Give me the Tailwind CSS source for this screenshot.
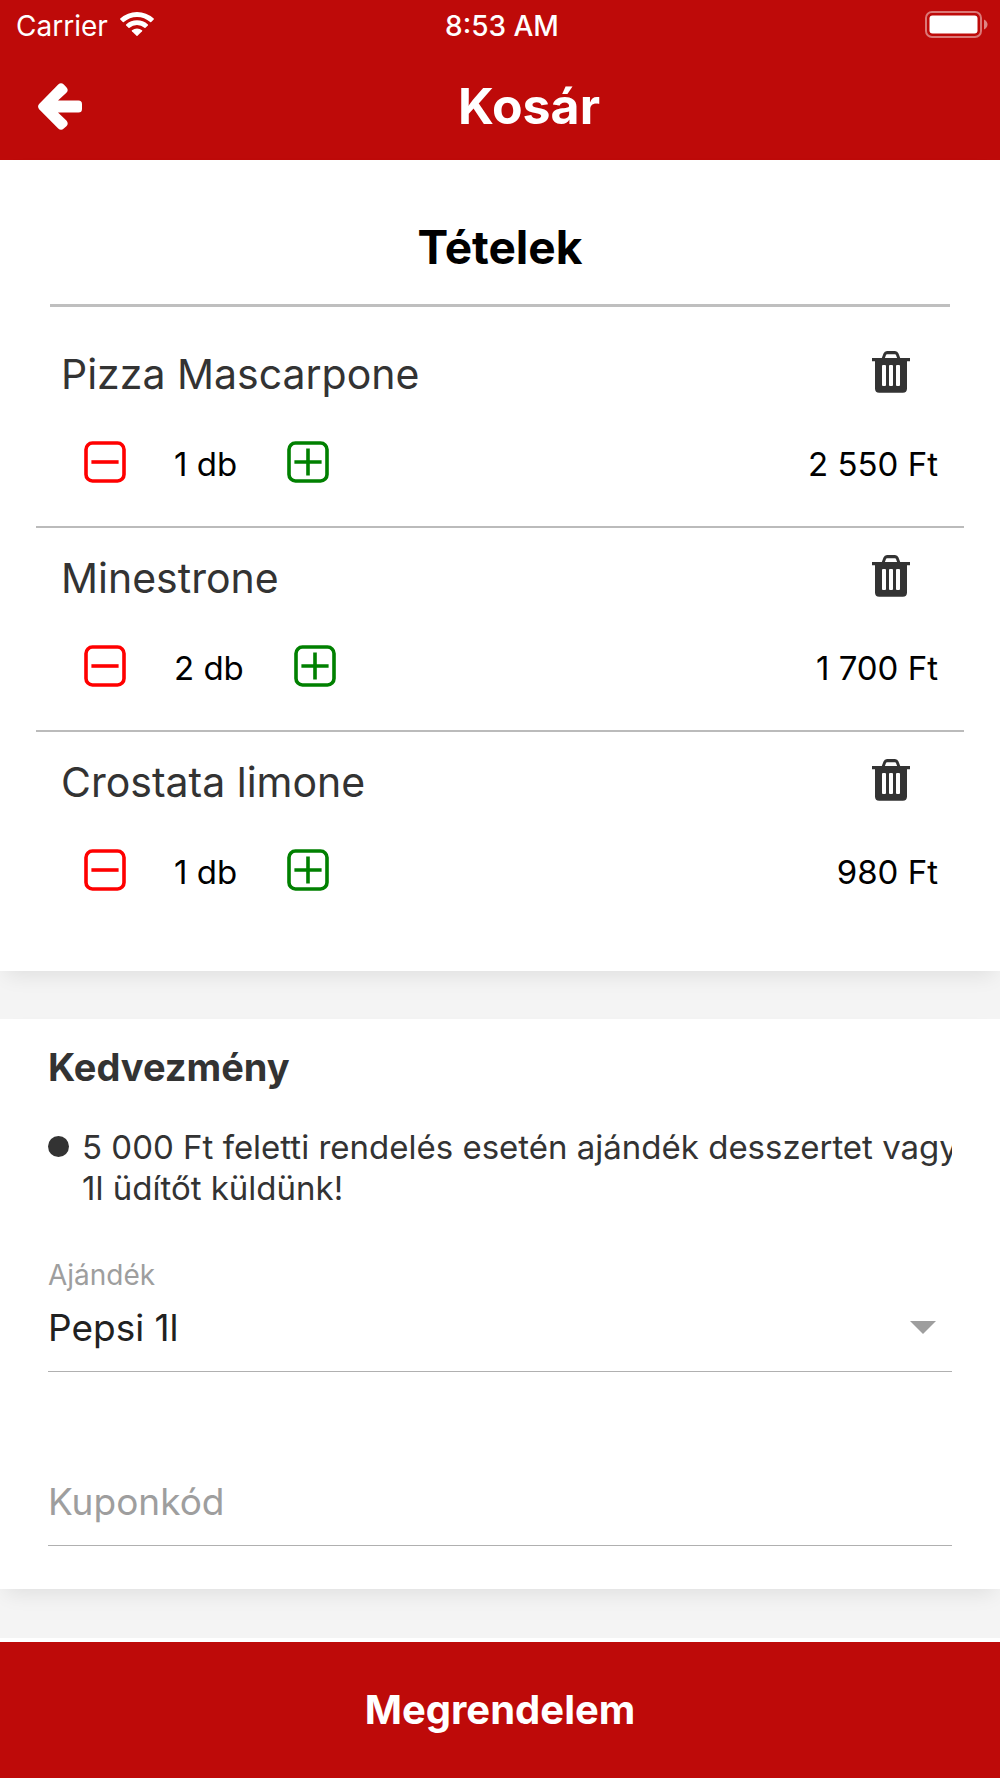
<!DOCTYPE html>
<html lang="hu">
<head>
<meta charset="utf-8">
<meta name="viewport" content="width=device-width, initial-scale=1">
<title>Kosár</title>
<script src="https://cdn.jsdelivr.net/npm/@tailwindcss/browser@4"></script>
</head>
<body class="flex min-h-screen flex-col bg-white font-['Inter',sans-serif] text-black">
<svg class="hidden" aria-hidden="true">
  <symbol id="trash" viewBox="0 0 38 42">
    <path fill="currentColor" fill-rule="evenodd" d="M0 7H9.800L11.500 2.500Q12.500 0 15 0H23Q25.500 0 26.500 2.500L28.200 7H38V10.300H35V37.500Q35 41.700 30.800 41.700H7.200Q3 41.700 3 37.500V10.300H0ZM12.900 7H25.100L24 4Q23.700 3.300 23 3.300H15Q14.300 3.300 14 4ZM11 14Q10 14 10 15V34Q10 35 11 35H13Q14 35 14 34V15Q14 14 13 14ZM18 14Q17 14 17 15V34Q17 35 18 35H20Q21 35 21 34V15Q21 14 20 14ZM25 14Q24 14 24 15V34Q24 35 25 35H27Q28 35 28 34V15Q28 14 27 14Z"/>
  </symbol>
  <symbol id="minus" viewBox="0 0 42 42">
    <rect x="2" y="2" width="38" height="38" rx="6.500" fill="none" stroke="currentColor" stroke-width="3.600"/>
    <path d="M9.200 21H32.800" stroke="currentColor" stroke-width="3.600" stroke-linecap="square" fill="none"/>
  </symbol>
  <symbol id="plus" viewBox="0 0 42 42">
    <rect x="2" y="2" width="38" height="38" rx="6.500" fill="none" stroke="currentColor" stroke-width="3.600"/>
    <path d="M9.200 21H32.800M21 9.200V32.800" stroke="currentColor" stroke-width="3.600" stroke-linecap="square" fill="none"/>
  </symbol>
</svg>

<header class="bg-[#be0a09] text-white">
  <div class="grid h-[52px] grid-cols-[1fr_auto_1fr] items-center pr-3 pl-4 text-[28px] leading-8">
    <div class="flex items-center gap-3">
      <span>Carrier</span>
      <svg class="mb-1 h-6 w-[34px]" viewBox="0 0 34 24" fill="currentColor" aria-hidden="true">
        <path d="M.3 6.600Q7.500 0 17 0T33.700 6.600Q34.200 7.100 33.700 7.600L31.200 10.100Q30.700 10.500 30.200 10.100Q24.500 4.900 17 4.900T3.800 10.100Q3.300 10.500 2.800 10.100L.3 7.600Q-.2 7.100.3 6.600Z"/>
        <path d="M6.100 12.400Q10.800 8.200 17 8.200T27.900 12.400Q28.400 12.900 27.900 13.400L25.500 15.800Q25 16.300 24.400 15.800Q21.300 13.100 17 13.100T9.600 15.800Q9 16.300 8.500 15.800L6.100 13.400Q5.600 12.900 6.100 12.400Z"/>
        <path d="M12 18.200Q14.200 16.500 17 16.500T22 18.200Q22.600 18.700 22.100 19.200L17.500 23.800Q17 24.200 16.500 23.800L11.900 19.200Q11.400 18.700 12 18.200Z"/>
      </svg>
    </div>
    <span class="text-center font-medium">8:53 AM</span>
    <svg class="mb-1 h-[27px] w-[63px] justify-self-end" viewBox="0 0 63 27" aria-hidden="true">
      <rect x="1" y="1" width="55" height="25" rx="6" fill="none" stroke="#fff" stroke-opacity=".45" stroke-width="2"/>
      <rect x="4.500" y="4.500" width="48" height="18" rx="3" fill="#fff"/>
      <path d="M59 8.500Q62.500 10.500 62.500 13.500T59 18.500Z" fill="#fff" fill-opacity=".5"/>
    </svg>
  </div>
  <div class="flex h-[108px] items-center pr-6 pl-[38px]">
    <button type="button" aria-label="Vissza" class="cursor-pointer">
      <svg class="h-[47px] w-11" viewBox="0 0 44 47" fill="currentColor" aria-hidden="true">
        <path d="M1.100 21L20.200 1.600Q23 -.9 25.800 1.600L28.400 4.200Q31 7 28.400 9.800L20 17.600H40.500Q44 17.600 44 21.200V26Q44 29.600 40.500 29.600H20L28.400 37.600Q31 40.400 28.400 43.200L25.800 45.600Q23 48 20.200 45.500L1.100 26.200Q-1 23.600 1.100 21Z"/>
      </svg>
    </button>
    <h1 class="flex-1 text-center text-[50px] leading-[60px] font-bold">Kosár</h1>
  </div>
</header>

<main class="flex-1 bg-[#f4f4f4] pb-12">
  <section class="bg-white px-9 pt-[57px] pb-[37px] shadow-[0_10px_20px_-6px_rgba(0,0,0,0.09)]">
    <h2 class="mx-[14px] border-b-3 border-[#bfbfbf] pb-[27px] text-center text-[46px] leading-[60px] font-bold">Tételek</h2>
    <ul class="mt-[17px] divide-y-2 divide-[#bbb]">
      <li class="pt-[27px] pr-[26px] pb-[43px] pl-[25px]">
        <div class="flex h-12 items-start justify-between">
          <h3 class="text-[41px] leading-[46px] text-[#333]">Pizza Mascarpone</h3>
          <button type="button" aria-label="Törlés" class="mr-7 cursor-pointer text-[#333]"><svg class="h-[42px] w-[38px]"><use href="#trash"/></svg></button>
        </div>
        <div class="mt-[42px] flex h-[42px] items-end pl-[23px] text-[33px] leading-[38px]">
          <button type="button" aria-label="Kevesebb" class="cursor-pointer text-[#f00]"><svg class="size-[42px]"><use href="#minus"/></svg></button>
          <span class="mr-[50px] ml-12">1 db</span>
          <button type="button" aria-label="Több" class="cursor-pointer text-[#008000]"><svg class="size-[42px]"><use href="#plus"/></svg></button>
          <span class="ml-auto">2 550 Ft</span>
        </div>
      </li>
      <li class="pt-[27px] pr-[26px] pb-[43px] pl-[25px]">
        <div class="flex h-12 items-start justify-between">
          <h3 class="text-[41px] leading-[46px] text-[#333]">Minestrone</h3>
          <button type="button" aria-label="Törlés" class="mr-7 cursor-pointer text-[#333]"><svg class="h-[42px] w-[38px]"><use href="#trash"/></svg></button>
        </div>
        <div class="mt-[42px] flex h-[42px] items-end pl-[23px] text-[33px] leading-[38px]">
          <button type="button" aria-label="Kevesebb" class="cursor-pointer text-[#f00]"><svg class="size-[42px]"><use href="#minus"/></svg></button>
          <span class="mr-[50px] ml-12">2 db</span>
          <button type="button" aria-label="Több" class="cursor-pointer text-[#008000]"><svg class="size-[42px]"><use href="#plus"/></svg></button>
          <span class="ml-auto">1 700 Ft</span>
        </div>
      </li>
      <li class="pt-[27px] pr-[26px] pb-[43px] pl-[25px]">
        <div class="flex h-12 items-start justify-between">
          <h3 class="text-[41px] leading-[46px] text-[#333]">Crostata limone</h3>
          <button type="button" aria-label="Törlés" class="mr-7 cursor-pointer text-[#333]"><svg class="h-[42px] w-[38px]"><use href="#trash"/></svg></button>
        </div>
        <div class="mt-[42px] flex h-[42px] items-end pl-[23px] text-[33px] leading-[38px]">
          <button type="button" aria-label="Kevesebb" class="cursor-pointer text-[#f00]"><svg class="size-[42px]"><use href="#minus"/></svg></button>
          <span class="mr-[50px] ml-12">1 db</span>
          <button type="button" aria-label="Több" class="cursor-pointer text-[#008000]"><svg class="size-[42px]"><use href="#plus"/></svg></button>
          <span class="ml-auto">980 Ft</span>
        </div>
      </li>
    </ul>
  </section>

  <section class="mt-12 bg-white px-12 pt-6 pb-[43px] shadow-[0_10px_20px_-6px_rgba(0,0,0,0.09)]">
    <h2 class="text-[38px] leading-12 font-bold text-[#333]">Kedvezmény</h2>
    <ul class="mt-9 text-[33px] leading-[41px] text-[#333]">
      <li class="flex gap-[13px] overflow-hidden whitespace-nowrap">
        <span class="mt-[9px] size-[21px] shrink-0 rounded-full bg-[#333]"></span>
        <span>5 000 Ft feletti rendelés esetén ajándék desszertet vagy<br>1l üdítőt küldünk!</span>
      </li>
    </ul>
    <label for="gift" class="mt-[50px] block text-[28px] leading-8 text-[#9e9e9e]">Ajándék</label>
    <div class="relative border-b border-[#b0b0b0] pt-[13px] pb-[19px]">
      <select id="gift" class="block h-12 w-full appearance-none bg-transparent text-[37px] leading-12 text-[#212121]">
        <option>Pepsi 1l</option>
      </select>
      <svg class="pointer-events-none absolute top-[30px] right-4 h-[13px] w-[26px]" viewBox="0 0 26 13" aria-hidden="true"><path d="M0 0H26L13 13Z" fill="#9e9e9e"/></svg>
    </div>
    <div class="mt-[106px] border-b border-[#b0b0b0] pb-[19px]">
      <input type="text" aria-label="Kuponkód" placeholder="Kuponkód" class="block h-12 w-full bg-transparent text-[37px] leading-12 text-[#212121] outline-none placeholder:text-[#9e9e9e]">
    </div>
  </section>
</main>

<footer class="pt-1">
  <button type="button" class="block h-[136px] w-full cursor-pointer bg-[#be0a09] text-center text-[40px] font-bold text-white">Megrendelem</button>
</footer>
</body>
</html>
